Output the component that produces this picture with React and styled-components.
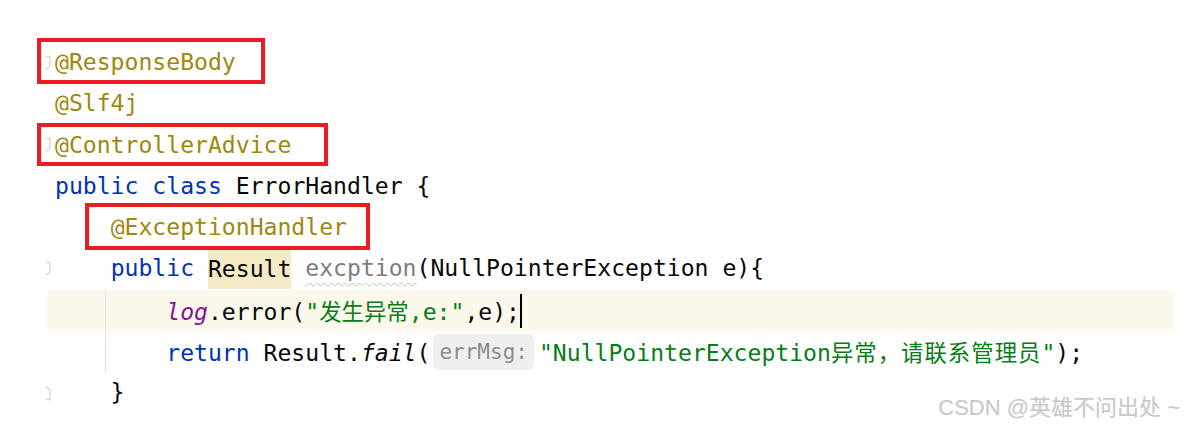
import React from "react";
import styled, { createGlobalStyle, css } from "styled-components";

const Global = createGlobalStyle`
  html, body { margin: 0; padding: 0; background: #ffffff; }
  body { width: 1188px; height: 429px; overflow: hidden; }
`;

const Editor = styled.div`
  position: relative;
  width: 1188px;
  height: 429px;
  padding-top: 42px;
  box-sizing: border-box;
  background: #ffffff;
  font-family: "DejaVu Sans Mono", "Noto Sans CJK SC", monospace;
  font-size: 23.1px;
  color: #080808;
`;

const Line = styled.div`
  display: flex;
  height: 41.3px;
  line-height: 41.3px;
  white-space: pre;
`;

const Gutter = styled.div`
  position: relative;
  z-index: 1;
  width: 47px;
  flex: none;
  display: flex;
  align-items: center;
  justify-content: flex-end;
`;

const FoldSlot = styled.span`
  display: block;
  margin-right: -6px;
`;

const Code = styled.div`
  position: relative;
  width: 1126px;
  padding-left: 8px;
  box-sizing: border-box;
  background: ${(p) => (p.$current ? "#fcf9ec" : "transparent")};
  ${(p) =>
    p.$guide &&
    css`
      &::before {
        content: "";
        position: absolute;
        left: 58px;
        top: 0;
        bottom: ${p.$guideBottom || 0}px;
        width: 1px;
        background: #e2e2e2;
      }
    `}
`;

const Ann = styled.span`
  color: #9e880d;
`;
const Kw = styled.span`
  color: #0033b3;
`;
const Str = styled.span`
  color: #067d17;
`;
const Field = styled.span`
  color: #871094;
  font-style: italic;
`;
const Italic = styled.span`
  font-style: italic;
`;
const Unused = styled.span`
  color: #7d7d7d;
  text-decoration: underline wavy #a9d3a2;
  text-decoration-thickness: 1px;
  text-underline-offset: 6px;
`;
const Cjk = styled.span`
  font-family: "Noto Sans CJK SC", sans-serif;
  font-size: 22.4px;
  letter-spacing: ${(p) => p.$ls || 0}px;
`;
const Highlight = styled.span`
  display: inline-block;
  background: #f5eac6;
  height: 39px;
  line-height: 39px;
  vertical-align: top;
  margin-top: 2px;
`;
const Hint = styled.span`
  display: inline-block;
  vertical-align: top;
  margin: 3px 5px 0 3px;
  padding: 0 6px;
  height: 36px;
  line-height: 36px;
  border-radius: 6px;
  background: #efefef;
  color: #8c8c8c;
  font-size: 21px;
`;
const Caret = styled.span`
  display: inline-block;
  width: 2px;
  height: 34px;
  background: #000000;
  vertical-align: top;
  margin-top: 4px;
`;

const MarkedBlock = styled.span`
  display: inline-block;
  position: relative;
  height: 41.3px;
  &::after {
    content: "";
    position: absolute;
    left: ${(p) => p.$l}px;
    right: ${(p) => p.$r}px;
    top: ${(p) => p.$t}px;
    bottom: ${(p) => p.$b}px;
    border: 4px solid #ec1c24;
    pointer-events: none;
    z-index: 2;
  }
`;

const Watermark = styled.div`
  position: absolute;
  right: 8px;
  bottom: 8px;
  font-family: "Liberation Sans", "Noto Sans CJK SC", sans-serif;
  font-size: 22px;
  color: #c9c9c9;
  text-shadow: 0 0 1px rgba(0, 0, 0, 0.08);
`;

const FoldIcon = ({ end }) => (
  <FoldSlot>
    <svg width="8" height="16" viewBox="0 0 8 16" style={{ display: "block" }}>
      <path
        d={end ? "M1 1.5 L5 5 V14.5 H1" : "M1 1.5 H5 V11 L1 14.5"}
        fill="none"
        stroke="#d4d4d4"
        strokeWidth="1.3"
      />
    </svg>
  </FoldSlot>
);

export default function App() {
  return (
    <>
      <Global />
      <Editor>
        <Line>
          <Gutter>
            <FoldIcon />
          </Gutter>
          <Code>
            <MarkedBlock $l={-18} $r={-29} $t={-4} $b={-1}>
              <Ann>@ResponseBody</Ann>
            </MarkedBlock>
          </Code>
        </Line>
        <Line>
          <Gutter />
          <Code>
            <Ann>@Slf4j</Ann>
          </Code>
        </Line>
        <Line>
          <Gutter>
            <FoldIcon />
          </Gutter>
          <Code>
            <MarkedBlock $l={-18} $r={-37} $t={-2} $b={-0.5}>
              <Ann>@ControllerAdvice</Ann>
            </MarkedBlock>
          </Code>
        </Line>
        <Line>
          <Gutter />
          <Code>
            <Kw>public</Kw> <Kw>class</Kw> ErrorHandler {"{"}
          </Code>
        </Line>
        <Line>
          <Gutter />
          <Code>
            {"    "}
            <MarkedBlock $l={-26} $r={-23} $t={-4} $b={-2}>
              <Ann>@ExceptionHandler</Ann>
            </MarkedBlock>
          </Code>
        </Line>
        <Line>
          <Gutter>
            <FoldIcon />
          </Gutter>
          <Code>
            {"    "}
            <Kw>public</Kw> <Highlight>Result</Highlight> <Unused>excption</Unused>
            (NullPointerException e){"{"}
          </Code>
        </Line>
        <Line>
          <Gutter />
          <Code $current $guide>
            {"        "}
            <Field>log</Field>.error(<Str>"<Cjk>发生异常</Cjk>,e:"</Str>,e);
            <Caret />
          </Code>
        </Line>
        <Line>
          <Gutter />
          <Code $guide $guideBottom={-1}>
            {"        "}
            <Kw>return</Kw> Result.<Italic>fail</Italic>(<Hint>errMsg:</Hint>
            <Str>
              "NullPointerException<Cjk $ls={1}>异常，请联系管理员</Cjk>"
            </Str>
            );
          </Code>
        </Line>
        <Line>
          <Gutter>
            <FoldIcon end />
          </Gutter>
          <Code>{"    }"}</Code>
        </Line>
        <Watermark>CSDN @英雄不问出处 ~</Watermark>
      </Editor>
    </>
  );
}
